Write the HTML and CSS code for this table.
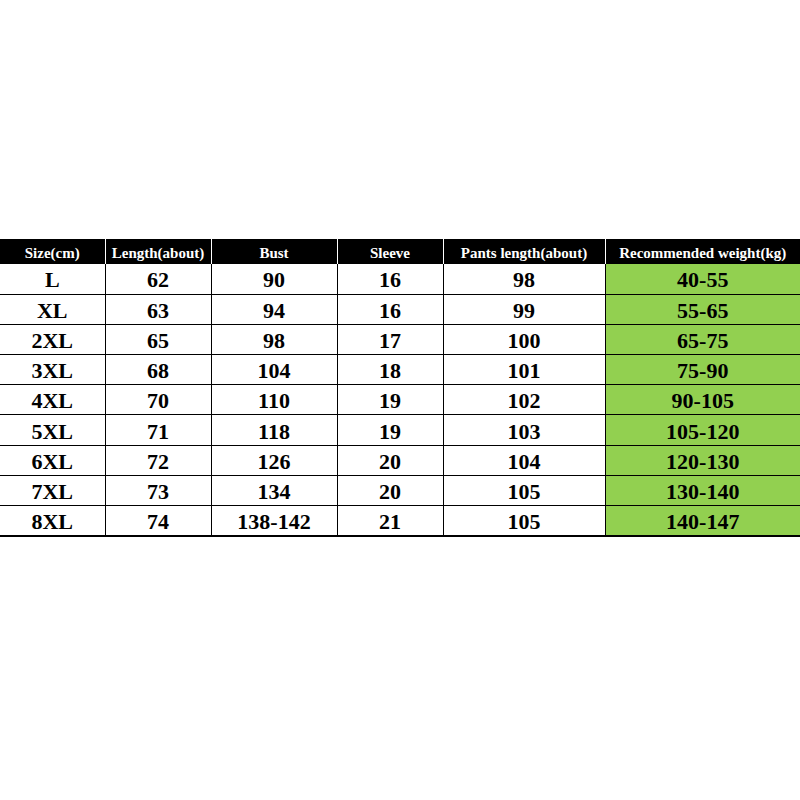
FILE: index.html
```html
<!DOCTYPE html>
<html>
<head>
<meta charset="utf-8">
<link rel="stylesheet" href="styles.css">
</head>
<body>
<div class="page">
<table class="size-table">
<colgroup>
<col class="c1"><col class="c2"><col class="c3"><col class="c4"><col class="c5"><col class="c6">
</colgroup>
<thead>
<tr><th>Size(cm)</th><th>Length(about)</th><th>Bust</th><th>Sleeve</th><th>Pants length(about)</th><th>Recommended weight(kg)</th></tr>
</thead>
<tbody>
<tr><td>L</td><td>62</td><td>90</td><td>16</td><td>98</td><td class="green">40-55</td></tr>
<tr><td>XL</td><td>63</td><td>94</td><td>16</td><td>99</td><td class="green">55-65</td></tr>
<tr><td>2XL</td><td>65</td><td>98</td><td>17</td><td>100</td><td class="green">65-75</td></tr>
<tr><td>3XL</td><td>68</td><td>104</td><td>18</td><td>101</td><td class="green">75-90</td></tr>
<tr><td>4XL</td><td>70</td><td>110</td><td>19</td><td>102</td><td class="green">90-105</td></tr>
<tr><td>5XL</td><td>71</td><td>118</td><td>19</td><td>103</td><td class="green">105-120</td></tr>
<tr><td>6XL</td><td>72</td><td>126</td><td>20</td><td>104</td><td class="green">120-130</td></tr>
<tr><td>7XL</td><td>73</td><td>134</td><td>20</td><td>105</td><td class="green">130-140</td></tr>
<tr><td>8XL</td><td>74</td><td>138-142</td><td>21</td><td>105</td><td class="green">140-147</td></tr>
</tbody>
</table>
</div>
</body>
</html>
```

FILE: styles.css
```css
html, body {
  margin: 0;
  padding: 0;
  background: #ffffff;
}
.page {
  width: 800px;
  height: 800px;
  padding-top: 239px;
  box-sizing: border-box;
}
.size-table {
  width: 800px;
  border-collapse: collapse;
  table-layout: fixed;
  font-family: "Liberation Serif", "Times New Roman", serif;
  font-weight: bold;
  color: #000;
}
.c1 { width: 105px; }
.c2 { width: 106px; }
.c3 { width: 126px; }
.c4 { width: 106px; }
.c5 { width: 162px; }
.c6 { width: 195px; }
.size-table th {
  background: #000;
  color: #fff;
  font-size: 15px;
  height: 25px;
  padding: 3px 0 0;
  box-sizing: border-box;
  border-left: 1px solid #fff;
  text-align: center;
  vertical-align: middle;
  line-height: 1;
}
.size-table th:first-child {
  border-left: none;
}
.size-table td {
  height: 30.2px;
  padding: 3px 0 0;
  box-sizing: border-box;
  font-size: 22px;
  text-align: center;
  vertical-align: middle;
  border-left: 1px solid #000;
  border-bottom: 1px solid #000;
  line-height: 1;
}
.size-table td:first-child {
  border-left: none;
}
.size-table tbody tr:last-child td {
  border-bottom: 2px solid #000;
}
.size-table td.green {
  background: #92d050;
}
```
